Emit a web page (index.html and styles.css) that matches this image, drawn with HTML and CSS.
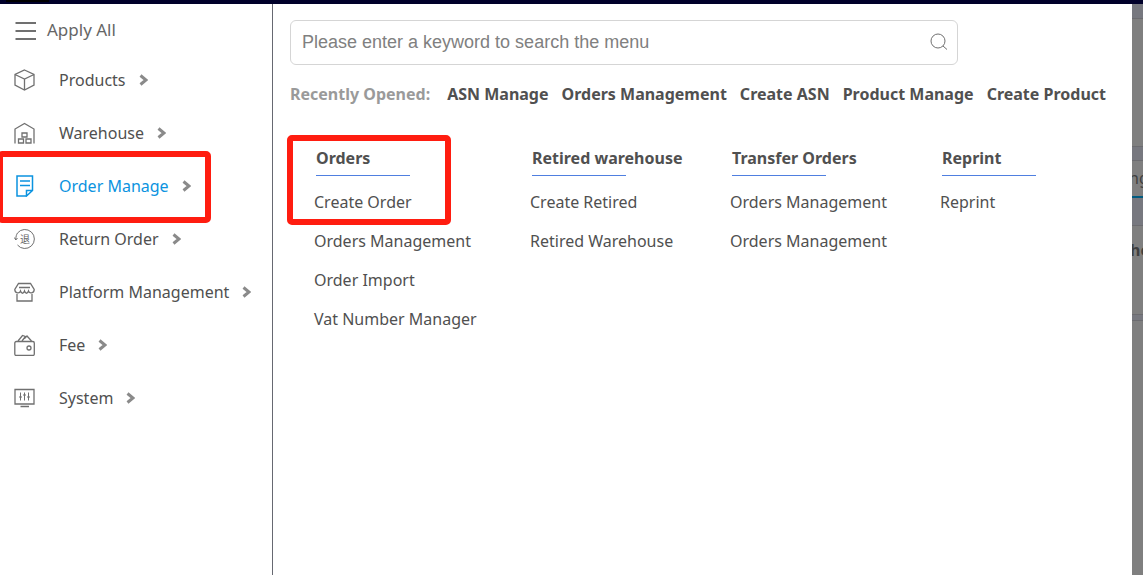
FILE: index.html
```html
<!DOCTYPE html>
<html lang="en">
<head>
<meta charset="utf-8">
<title>Order Manage</title>
<link rel="stylesheet" href="styles.css">
</head>
<body>
<div class="app">
  <header class="topbar"><span class="topbar-tab"></span></header>
  <div class="body">
    <nav class="sidebar">
      <button class="apply-all" type="button">
        <svg class="burger" width="22" height="20" viewBox="0 0 22 20"><path d="M0.500 2H21M0.500 10H21M0.500 18H21"/></svg>
        Apply All
      </button>
      <ul class="nav-list">
        <li><a class="nav-item" href="#">
          <svg class="icon" viewBox="0 0 22 22"><path d="M10.500 1L20 5.500V16L10.500 21L1 16V5.500ZM1 5.500L10.500 10L20 5.500M10.500 10V21"/></svg>
          <span>Products</span><svg class="chevron" viewBox="0 0 9 12"><path d="M1.500 1.500L7 6L1.500 10.500"/></svg></a></li>
        <li><a class="nav-item" href="#">
          <svg class="icon" viewBox="0 0 22 22"><path d="M1 21.500V7L10.500 1.500L20 7V21.500M8 11H13V15H8ZM4.500 17H9.500V21H4.500ZM12 17H17V21H12Z"/></svg>
          <span>Warehouse</span><svg class="chevron" viewBox="0 0 9 12"><path d="M1.500 1.500L7 6L1.500 10.500"/></svg></a></li>
        <li><a class="nav-item active highlight-nav" href="#">
          <svg class="icon" viewBox="0 0 22 22"><path d="M12.500 21H3V1H18.500V15.500L12.500 21V15.500H18.500M6 6H16M6 10.500H16"/></svg>
          <span>Order Manage</span><svg class="chevron" viewBox="0 0 9 12"><path d="M1.500 1.500L7 6L1.500 10.500"/></svg></a></li>
        <li><a class="nav-item" href="#">
          <svg class="icon" viewBox="0 0 22 22"><path class="thin" d="M3.500 5A9.500 9.500 0 1 1 3.500 17M1.800 11.500C1.800 8.500 2.500 6.500 3.500 5M0.300 9.500L1.800 12L3.500 10"/><text class="glyph" x="6" y="15">退</text></svg>
          <span>Return Order</span><svg class="chevron" viewBox="0 0 9 12"><path d="M1.500 1.500L7 6L1.500 10.500"/></svg></a></li>
        <li><a class="nav-item" href="#">
          <svg class="icon" viewBox="0 0 22 22"><path d="M4.500 2.500H16.500L20.200 8.500C20.200 12.500 15.500 13 14.500 10C13.500 13 11.500 13 10.500 10C9.500 13 7.500 13 6.500 10C5.500 13 0.800 12.500 0.800 8.500ZM5 6.500H16M3 13V20H18V13"/></svg>
          <span>Platform Management</span><svg class="chevron" viewBox="0 0 9 12"><path d="M1.500 1.500L7 6L1.500 10.500"/></svg></a></li>
        <li><a class="nav-item" href="#">
          <svg class="icon" viewBox="0 0 22 22"><rect x="0.800" y="7.500" width="19.500" height="14" rx="1.500"/><circle cx="15" cy="14" r="2"/><path d="M4 7L8.500 1.500L11.500 2.500L8 7M10.500 4.500L13 2L17.500 7"/></svg>
          <span>Fee</span><svg class="chevron" viewBox="0 0 9 12"><path d="M1.500 1.500L7 6L1.500 10.500"/></svg></a></li>
        <li><a class="nav-item" href="#">
          <svg class="icon" viewBox="0 0 22 22"><path d="M1 2.500H20V17H1ZM6.500 19.500H15"/><path class="thin" d="M6.500 5.500V13.500M10.500 5.500V13.500M14.500 5.500V13.500M5 10H8M9 8H12M13 10H16"/></svg>
          <span>System</span><svg class="chevron" viewBox="0 0 9 12"><path d="M1.500 1.500L7 6L1.500 10.500"/></svg></a></li>
      </ul>
    </nav>
    <main class="panel">
      <form class="search">
        <input type="search" aria-label="Search the menu" placeholder="Please enter a keyword to search the menu">
        <button class="search-btn" type="button" aria-label="Search"><svg width="18" height="18" viewBox="0 0 18 18"><circle cx="8" cy="8" r="7"/><path d="M13 13L17 16.500"/></svg></button>
      </form>
      <div class="recent">
        <span class="recent-label">Recently Opened:</span>
        <a href="#">ASN Manage</a>
        <a href="#">Orders Management</a>
        <a href="#">Create ASN</a>
        <a href="#">Product Manage</a>
        <a href="#">Create Product</a>
      </div>
      <div class="menu">
        <section class="highlight-menu">
          <h2>Orders</h2>
          <ul>
            <li><a href="#">Create Order</a></li>
            <li><a href="#">Orders Management</a></li>
            <li><a href="#">Order Import</a></li>
            <li><a href="#">Vat Number Manager</a></li>
          </ul>
        </section>
        <section>
          <h2>Retired warehouse</h2>
          <ul>
            <li><a href="#">Create Retired</a></li>
            <li><a href="#">Retired Warehouse</a></li>
          </ul>
        </section>
        <section>
          <h2>Transfer Orders</h2>
          <ul>
            <li><a href="#">Orders Management</a></li>
            <li><a href="#">Orders Management</a></li>
          </ul>
        </section>
        <section>
          <h2>Reprint</h2>
          <ul>
            <li><a href="#">Reprint</a></li>
          </ul>
        </section>
      </div>
    </main>
    <aside class="backdrop">
      <div class="band band-top"></div>
      <div class="card card-first"></div>
      <div class="band band-mid"></div>
      <div class="tab">ng</div>
      <div class="band band-low"></div>
      <div class="card card-head">he</div>
      <div class="band band-rule"></div>
    </aside>
  </div>
</div>
</body>
</html>
```
FILE: styles.css
```css
*, *::before, *::after { box-sizing: border-box; }
body {
  margin: 0;
  font: 16px/24px "Noto Sans", "Noto Sans CJK SC", sans-serif;
  color: #505050;
  background: #fff;
}
a { color: inherit; text-decoration: none; }
ul { list-style: none; margin: 0; padding: 0; }
button { font: inherit; color: inherit; background: none; border: 0; padding: 0; }
svg { fill: none; stroke: #707070; flex: none; }

.app { display: flex; flex-direction: column; min-height: 100vh; }
.topbar { height: 4px; background: #00002a; }
.topbar-tab { display: block; width: 43px; height: 2px; margin-left: 6px; background: #000; }
.body { display: flex; flex: 1; }

.sidebar { width: 273px; flex: none; border-right: 1px solid #666871; }
.apply-all { display: flex; align-items: center; gap: 10px; height: 49px; padding: 3px 0 0 15px; font-size: 17px; color: #666; }
.burger { stroke-width: 2; margin-top: 2px; }
.nav-item { position: relative; display: flex; align-items: center; height: 53px; padding-left: 14px; }
.icon { width: 22px; height: 22px; margin-right: 23px; stroke-width: 1.3; }
.thin { stroke-width: 1; }
.glyph { font: 10px "Noto Sans CJK SC", sans-serif; fill: #666; stroke: none; }
.chevron { width: 9px; height: 12px; margin-left: 13px; stroke: #8a8a8a; stroke-width: 3; }
.active { color: #0b93e0; }
.active .icon { stroke: #0b93e0; stroke-width: 1.5; }

.highlight-nav::after,
.highlight-menu::after {
  content: "";
  position: absolute;
  border: 6px solid #ff1d10;
  border-radius: 5px;
  pointer-events: none;
}
.highlight-nav::after { left: -3px; top: -8px; width: 214px; height: 72px; }
.highlight-menu::after { left: -27px; top: -11px; width: 164px; height: 90px; }

.panel { flex: 1; min-width: 0; padding: 16px 17px; }
.search { display: flex; align-items: center; width: 81%; height: 45px; padding: 0 9px 2px 11px; border: 1px solid #d5d5d5; border-radius: 6px; }
.search input { flex: 1; min-width: 0; border: 0; outline: 0; padding: 0; font: 18px/24px "Liberation Sans", Arial, sans-serif; background: none; }
.search input::placeholder { color: #808080; }
.search-btn { display: flex; }
.recent { display: flex; gap: 13px; margin-top: 17px; font-weight: 700; white-space: nowrap; }
.recent-label { color: #9a9a9a; margin-right: 4px; }

.menu { display: grid; grid-template-columns: 216px 200px 210px 1fr; margin-top: 40px; padding-left: 24px; white-space: nowrap; }
.menu section { position: relative; }
.menu h2 { margin: 0 0 7px 2px; font-size: 16px; line-height: 24px; font-weight: 700; }
.menu h2::after { content: ""; display: block; width: 94px; margin-top: 5px; border-top: 1px solid #4f7fe0; }
.menu li { line-height: 39px; }

.backdrop { width: 11px; flex: none; overflow: hidden; background: #7f7f7f; color: #3f3f3f; }
.band { background: #77787f; border-bottom: 1px solid #6c6c70; }
.band-top { height: 15px; }
.card-first { height: 127px; }
.band-mid { height: 15px; border-top: 1px solid #6c6c70; }
.tab { height: 37px; line-height: 34px; text-indent: -3px; border-bottom: 2px solid #005b80; }
.band-low { height: 28px; }
.card-head { height: 88px; padding-top: 12px; text-indent: -2px; font-weight: 700; }
.band-rule { height: 7px; border-top: 1px solid #6c6c70; }
```
